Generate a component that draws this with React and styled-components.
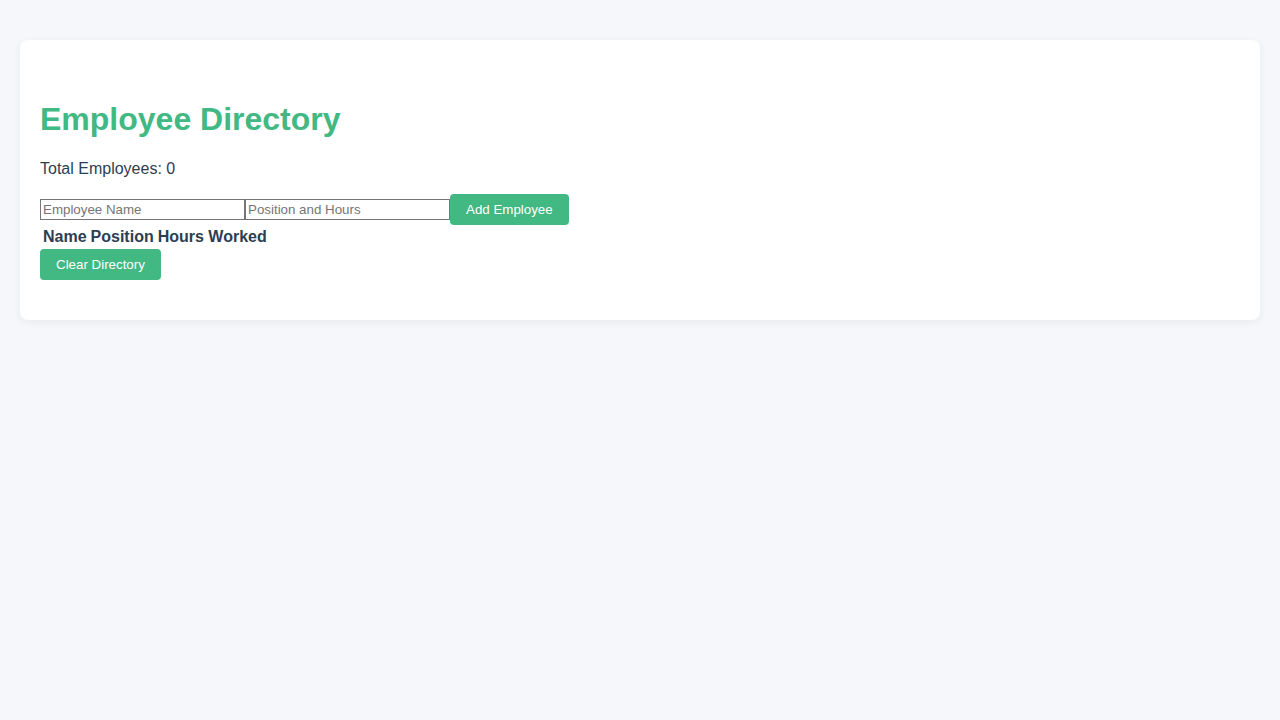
import React, { useState } from "react";
import styled, { createGlobalStyle } from "styled-components";

const Global = createGlobalStyle`
  html, body { margin: 0; padding: 0; background: #f5f7fa; }
  body { font-family: "Liberation Sans", Arial, sans-serif; color: #2c3e50; }
`;

const Page = styled.div`
  padding: 40px 20px;
`;

const Card = styled.div`
  background: #ffffff;
  border-radius: 8px;
  box-shadow: 0 2px 8px rgba(0, 0, 0, 0.06);
  padding: 40px 20px;
`;

const Title = styled.h1`
  color: #42b883;
  font-size: 32px;
  font-weight: bold;
  margin: 21.44px 0;
`;

const Count = styled.p`
  font-size: 16px;
  margin: 16px 0;
`;

const Form = styled.div`
  display: flex;
  align-items: center;
`;

const Input = styled.input`
  box-sizing: border-box;
  width: 205px;
  height: 21px;
  padding: 1px 2px;
  border: 1px solid #767676;
  border-radius: 0;
  font-family: "Liberation Sans", Arial, sans-serif;
  font-size: 13.333px;
  color: #000;
  background: #fff;
  &::placeholder { color: #757575; }
`;

const Button = styled.button`
  background: #42b883;
  color: #ffffff;
  border: none;
  border-radius: 4px;
  padding: 0 16px;
  height: 31px;
  font-family: "Liberation Sans", Arial, sans-serif;
  font-size: 13.333px;
  cursor: pointer;
`;

const Table = styled.table`
  border-spacing: 2px;
  font-size: 16px;
  color: #2c3e50;
`;

const Th = styled.th`
  padding: 1px;
  font-weight: bold;
  text-align: left;
`;

export default function App() {
  const [employees] = useState([]);
  return (
    <>
      <Global />
      <Page>
        <Card>
          <Title>Employee Directory</Title>
          <Count>Total Employees: {employees.length}</Count>
          <Form>
            <Input placeholder="Employee Name" />
            <Input placeholder="Position and Hours" />
            <Button>Add Employee</Button>
          </Form>
          <Table>
            <thead>
              <tr>
                <Th>Name</Th>
                <Th>Position</Th>
                <Th>Hours Worked</Th>
              </tr>
            </thead>
            <tbody />
          </Table>
          <Button>Clear Directory</Button>
        </Card>
      </Page>
    </>
  );
}
